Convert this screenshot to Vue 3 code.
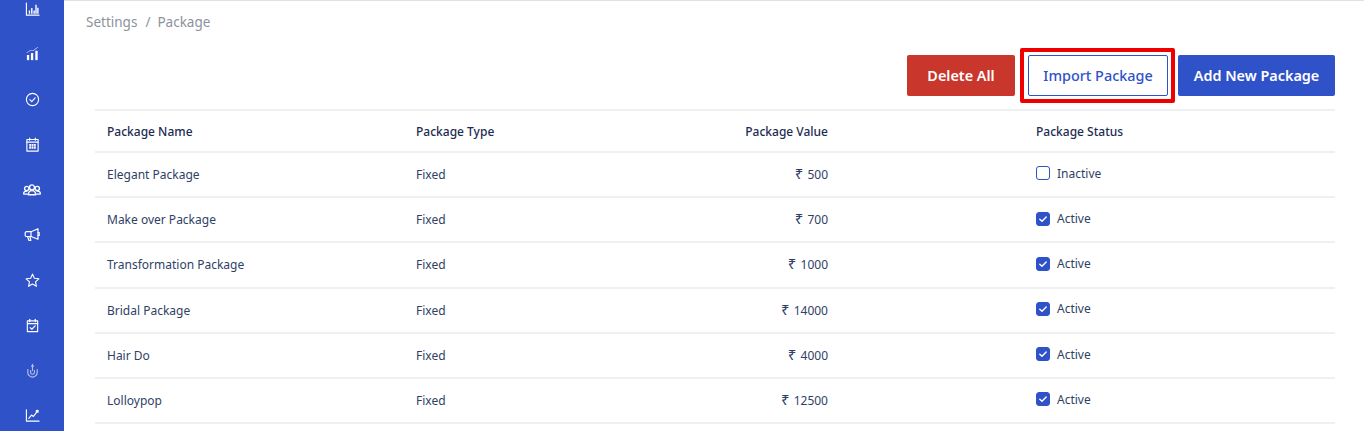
<template>
  <div class="page">
    <!-- sidebar -->
    <aside class="sidebar">
      <div class="side-list">
        <div v-for="icon in sideIcons" :key="icon.name" class="side-item">
          <svg viewBox="0 0 16 16" class="side-icon" :class="[icon.cls]" fill="none" stroke="#fff" stroke-width="1.2" stroke-linecap="round" stroke-linejoin="round">
            <path v-for="(d, i) in icon.paths" :key="i" :d="d" />
            <path v-for="(d, i) in icon.fills" :key="'f' + i" :d="d" fill="#fff" stroke="none" />
          </svg>
        </div>
      </div>
    </aside>

    <main class="content">
      <div class="breadcrumb">
        <span>Settings</span>
        <span class="sep">/</span>
        <span>Package</span>
      </div>

      <div class="actions">
        <button class="btn btn-red">Delete All</button>
        <button class="btn btn-outline">Import Package</button>
        <button class="btn btn-blue">Add New Package</button>
      </div>

      <table class="pkg-table">
        <thead>
          <tr>
            <th class="col-name">Package Name</th>
            <th class="col-type">Package Type</th>
            <th class="col-value">Package Value</th>
            <th class="col-status">Package Status</th>
          </tr>
        </thead>
        <tbody>
          <tr v-for="row in packages" :key="row.name">
            <td>{{ row.name }}</td>
            <td>{{ row.type }}</td>
            <td class="col-value"><span class="rupee">₹</span> {{ row.value }}</td>
            <td class="col-status">
              <label class="status">
                <span class="check" :class="{ on: row.active }">
                  <svg v-if="row.active" viewBox="0 0 14 14" width="14" height="14" fill="none" stroke="#fff" stroke-width="1.4" stroke-linecap="round" stroke-linejoin="round">
                    <path d="M3.8 7.2 6 9.3 10.2 4.9" />
                  </svg>
                </span>
                {{ row.active ? 'Active' : 'Inactive' }}
              </label>
            </td>
          </tr>
        </tbody>
      </table>
    </main>
  </div>
</template>

<script setup>
const sideIcons = [
  { name: 'bars', paths: ['M1.5 1V14H15'], fills: ['M4 9H5.500V12.500H4Z', 'M6.500 6.500H8V12.500H6.500Z', 'M9 9H10.500V12.500H9Z', 'M11 3H12.500V12.500H11Z', 'M13 6H14.500V12.500H13Z'] },
  { name: 'growth', paths: [], fills: ['M2 8.500H4.500V14H2Z', 'M6.300 6.500H8.800V14H6.300Z', 'M11 4H13.500V14H11Z', 'M1.500 6 5.500 3.500 8.500 3.700 13.500 0 13.700 0.500 8.700 4.300 5.700 4.100 1.800 6.500Z'] },
  { name: 'check', paths: ['M8 1.500A6.500 6.500 0 1 0 8 14.500 6.500 6.500 0 1 0 8 1.500Z', 'M5.200 8.200 7.200 10.200 10.800 6.200'] },
  { name: 'calendar', paths: ['M2 2.700H14V15H2Z', 'M2 5.500H14', 'M5 1V3.500', 'M11 1V3.500'], fills: ['M4.500 7.500H6.500V9.500H4.500Z', 'M7 7.500H9V9.500H7Z', 'M9.500 7.500H11.500V9.500H9.500Z', 'M4.500 10H6.500V12.500H4.500Z', 'M7 10H9V12.500H7Z', 'M9.500 10H11.500V12.500H9.500Z'] },
  { name: 'group', cls: 'wide', paths: ['M8 3.500A2.200 2.200 0 1 0 8 7.900 2.200 2.200 0 1 0 8 3.500Z', 'M3.300 4.800A1.900 1.900 0 1 0 3.300 8.600 1.900 1.900 0 1 0 3.300 4.800Z', 'M12.700 4.800A1.900 1.900 0 1 0 12.700 8.600 1.900 1.900 0 1 0 12.700 4.800Z', 'M4.800 12.200C4.800 9.500 6 8.500 8 8.500S11.200 9.500 11.200 12.200Z', 'M4.800 11.700H0.800C0.200 10 1.300 9 3.300 9', 'M11.200 11.700H15.200C15.800 10 14.700 9 12.700 9'] },
  { name: 'megaphone', cls: 'big', paths: ['M14 1.800V12.200L7 9.500H2.500A1.300 1.300 0 0 1 1.200 8.200V6A1.300 1.300 0 0 1 2.500 4.700H7Z', 'M7 4.700V9.500', 'M3.500 9.500 5 13.500H6.800L6 9.800', 'M14 5.500H15.200V8.500H14'] },
  { name: 'star', paths: ['M8 1.200 10 5.600 14.800 6.200 11.200 9.400 12.200 14.200 8 11.800 3.800 14.200 4.800 9.400 1.200 6.200 6 5.600Z'] },
  { name: 'calendar-check', paths: ['M2.500 3H13.500V14.500H2.500Z', 'M2.500 6H13.500', 'M5 1.300V4', 'M11 1.300V4', 'M5.500 10.200 7.300 12 10.800 8.300'] },
  { name: 'magnet', cls: 'dim', paths: ['M3 7V10A5 5 0 0 0 13 10V7', 'M6 8V10A2 2 0 0 0 10 10V8', 'M8 1.500V8'], fills: ['M6.200 4 8 1 9.800 4Z'] },
  { name: 'trend', paths: ['M1.500 1.800V14H15', 'M4 11 7 7.500 9 9 12.500 4.500'], fills: ['M11.500 2H14.500V5H11.500Z'] }
]

const packages = [
  { name: 'Elegant Package', type: 'Fixed', value: 500, active: false },
  { name: 'Make over Package', type: 'Fixed', value: 700, active: true },
  { name: 'Transformation Package', type: 'Fixed', value: 1000, active: true },
  { name: 'Bridal Package', type: 'Fixed', value: 14000, active: true },
  { name: 'Hair Do', type: 'Fixed', value: 4000, active: true },
  { name: 'Lolloypop', type: 'Fixed', value: 12500, active: true }
]
</script>

<style>
html, body { margin: 0; height: 431px; overflow: hidden; background: #fff; }
</style>

<style scoped>
.page { display: flex; height: 431px; overflow: hidden; font-family: "Noto Sans", "Open Sans", sans-serif; background: #fff; }
.sidebar { width: 64px; flex-shrink: 0; background: #2f52c9; overflow: hidden; }
.side-list { margin-top: -13px; display: flex; flex-direction: column; }
.side-item { height: 45.1px; display: flex; align-items: center; justify-content: center; }
.side-icon { width: 15px; height: 15px; }
.side-icon.dim { opacity: 0.65; }
.side-icon.wide { width: 18px; height: 18px; }
.side-icon.big { width: 16px; height: 16px; }

.content { flex: 1; min-width: 0; border-top: 1px solid #dee2e6; padding: 0 29px 0 22px; }
.breadcrumb { display: flex; gap: 7px; height: 41px; align-items: center; font-size: 13.5px; color: #8c929b; margin-bottom: 13px; }
.breadcrumb .sep { margin-left: 1px; }

.actions { display: flex; justify-content: flex-end; gap: 10px; margin-bottom: 13px; }
.btn { height: 41px; font-family: inherit; font-size: 14.4px; font-weight: 600; border-radius: 2px; border: 1px solid transparent; padding: 0; cursor: pointer; }
.btn-red { width: 108px; background: #c9362c; color: #fff; margin-right: 3px; }
.btn-outline { width: 140px; background: #fff; color: #2f52c9; border-color: #2f52c9; font-weight: 500; position: relative; }
.btn-outline::after { content: ""; position: absolute; inset: -8px -8px -8px -9px; border: 4px solid #ee0000; border-radius: 2px; pointer-events: none; }
.btn-blue { width: 157px; background: #2f52c9; color: #fff; }

.pkg-table { width: 1240px; margin-left: 9px; border-collapse: collapse; table-layout: fixed; font-size: 12px; color: #2f3f66; border-top: 2px solid #eef0f3; }
.pkg-table th { height: 40px; padding: 0 12px; text-align: left; font-weight: 500; color: #1c2b52; border-bottom: 2px solid #eef0f3; }
.pkg-table td { height: 43.2px; padding: 0 12px; border-bottom: 2px solid #eef0f3; }
.col-name { width: 285px; }
.col-type { width: 176px; }
.pkg-table .col-value { width: 212px; text-align: right; }
.pkg-table .col-status { padding-left: 196px; }
.rupee { font-size: 15px; line-height: 1; margin-right: 1px; }

.status { display: inline-flex; align-items: center; gap: 7px; white-space: nowrap; }
.check { width: 14px; height: 14px; box-sizing: border-box; border: 1px solid #2f52c9; border-radius: 3px; background: #fff; display: inline-flex; align-items: center; justify-content: center; }
.check.on { background: #2f52c9; }
.check svg { flex-shrink: 0; }
</style>
